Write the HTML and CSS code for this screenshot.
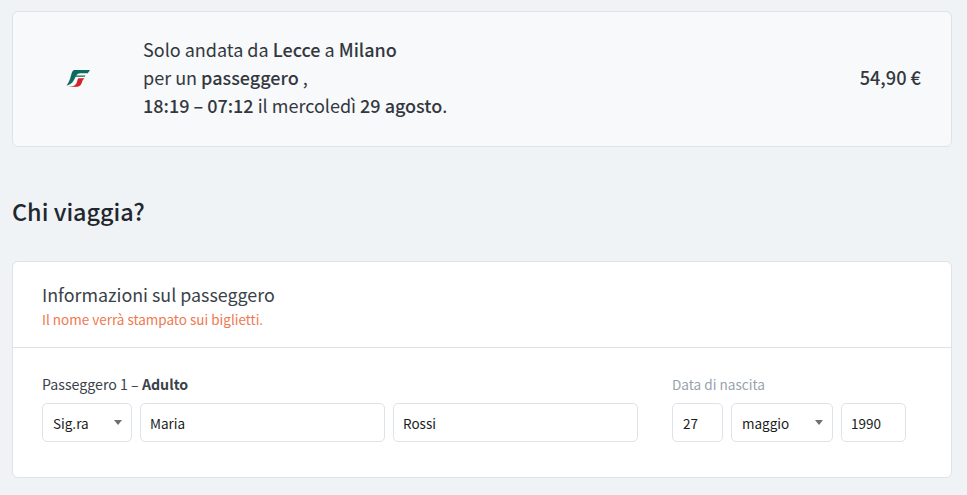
FILE: index.html
```html
<!DOCTYPE html>
<html lang="it">
<head>
<meta charset="utf-8">
<title>Chi viaggia?</title>
<link rel="stylesheet" href="styles.css">
</head>
<body>
<main class="page">
  <section class="summary">
    <div class="logo-cell">
      <svg class="logo" viewBox="0 0 24 17" width="24" height="17" aria-label="Trenitalia">
        <defs>
          <linearGradient id="fade" x1="0" x2="1" y1="0" y2="0">
            <stop offset="0" stop-color="#e9c9c6"/>
            <stop offset="0.55" stop-color="#d2232a"/>
            <stop offset="1" stop-color="#d2232a"/>
          </linearGradient>
        </defs>
        <path fill="#0b6b5c" d="M8 0H24L21.8 3.2H14.4C12 3.2 11 4.2 10.2 5.6H19.4L18.8 6.8H9.6C8 10.4 6 14.6 0.5 15.6C3 13 4 9 5 5.6C5.8 2.6 6.5 0.5 8 0Z"/>
        <path fill="url(#fade)" d="M12.4 8.2H18.6C16.9 9.2 16.4 11 15.7 13C14.7 16 12 17 9 17H0.5C5.6 16.4 9.4 16 10.6 13C11.2 11.2 11.4 9.6 12.4 8.2Z"/>
      </svg>
    </div>
    <p class="trip">
      Solo andata da <b>Lecce</b> a <b>Milano</b><br>
      per un <b>passeggero</b> ,<br>
      <b>18:19 – 07:12</b> il mercoledì <b>29 agosto</b>.
    </p>
    <div class="price">54,90 €</div>
  </section>

  <h1 class="title">Chi viaggia?</h1>

  <section class="card">
    <header class="card-head">
      <h2 class="card-title">Informazioni sul passeggero</h2>
      <p class="card-note">Il nome verrà stampato sui biglietti.</p>
    </header>
    <div class="card-body">
      <div class="group group-name">
        <div class="label">Passeggero 1 – <b class="strong">Adulto</b></div>
        <div class="fields">
          <div class="field select f-title"><span>Sig.ra</span><i class="caret"></i></div>
          <div class="field f-name">Maria</div>
          <div class="field f-name">Rossi</div>
        </div>
      </div>
      <div class="group">
        <div class="label label-muted">Data di nascita</div>
        <div class="fields">
          <div class="field f-day">27</div>
          <div class="field select f-month"><span>maggio</span><i class="caret"></i></div>
          <div class="field f-year">1990</div>
        </div>
      </div>
    </div>
  </section>
</main>
</body>
</html>
```
FILE: styles.css
```css
* { box-sizing: border-box; }
html, body { margin: 0; height: 100%; }
body {
  background: #eff3f6;
  color: #33383f;
  font-family: "Noto Sans CJK SC", "Noto Sans", sans-serif;
  overflow: hidden;
}
b { font-weight: 500; }
.strong { font-weight: 700; }
.page { width: 940px; margin-left: 12px; padding-top: 11px; }
.summary {
  display: flex;
  align-items: center;
  height: 136px;
  background: #f8f9fb;
  border: 1px solid #dde3e8;
  border-radius: 6px;
  padding: 0 30px 0 0;
}
.logo-cell { width: 130px; display: flex; justify-content: center; }
.logo { display: block; margin-left: -1px; margin-bottom: 1px; }
.trip { flex: 1; margin: 0 0 4px; font-size: 18px; line-height: 28px; }
.price { font-size: 18.2px; font-weight: 500; margin-bottom: 4px; }
.title { margin: 48px 0 0; font-size: 23.4px; line-height: 32px; font-weight: 500; color: #22272d; }
.card {
  margin-top: 34px;
  height: 217px;
  background: #fff;
  border: 1px solid #dde3e8;
  border-radius: 6px;
}
.card-head { height: 86px; padding: 20px 29px 0; border-bottom: 1px solid #dde3e8; }
.card-title { margin: 0; font-size: 17.85px; line-height: 24px; font-weight: 400; color: #3a4149; }
.card-note { margin: 4px 0 0; font-size: 13.5px; line-height: 18px; color: #f0784f; }
.card-body { display: flex; gap: 34px; padding: 27px 29px 0; }
.label { font-size: 14.2px; line-height: 18px; margin-bottom: 10px; color: #3a4149; }
.label-muted { font-size: 13.6px; color: #98a3ad; }
.fields { display: flex; gap: 8px; }
.field {
  display: flex;
  align-items: center;
  justify-content: space-between;
  height: 39px;
  padding: 0 9px 0 10px;
  background: #fff;
  border: 1px solid #dde3e8;
  border-radius: 5px;
  font-size: 13.5px;
  color: #1a1d21;
}
.f-title { width: 90px; }
.f-name { width: 245px; padding-left: 9px; }
.f-day { width: 51px; }
.f-month { width: 102px; }
.f-year { width: 65px; padding-left: 9px; }
.caret {
  width: 0;
  height: 0;
  border-left: 4.5px solid transparent;
  border-right: 4.5px solid transparent;
  border-top: 5px solid #6c6f75;
}
```
